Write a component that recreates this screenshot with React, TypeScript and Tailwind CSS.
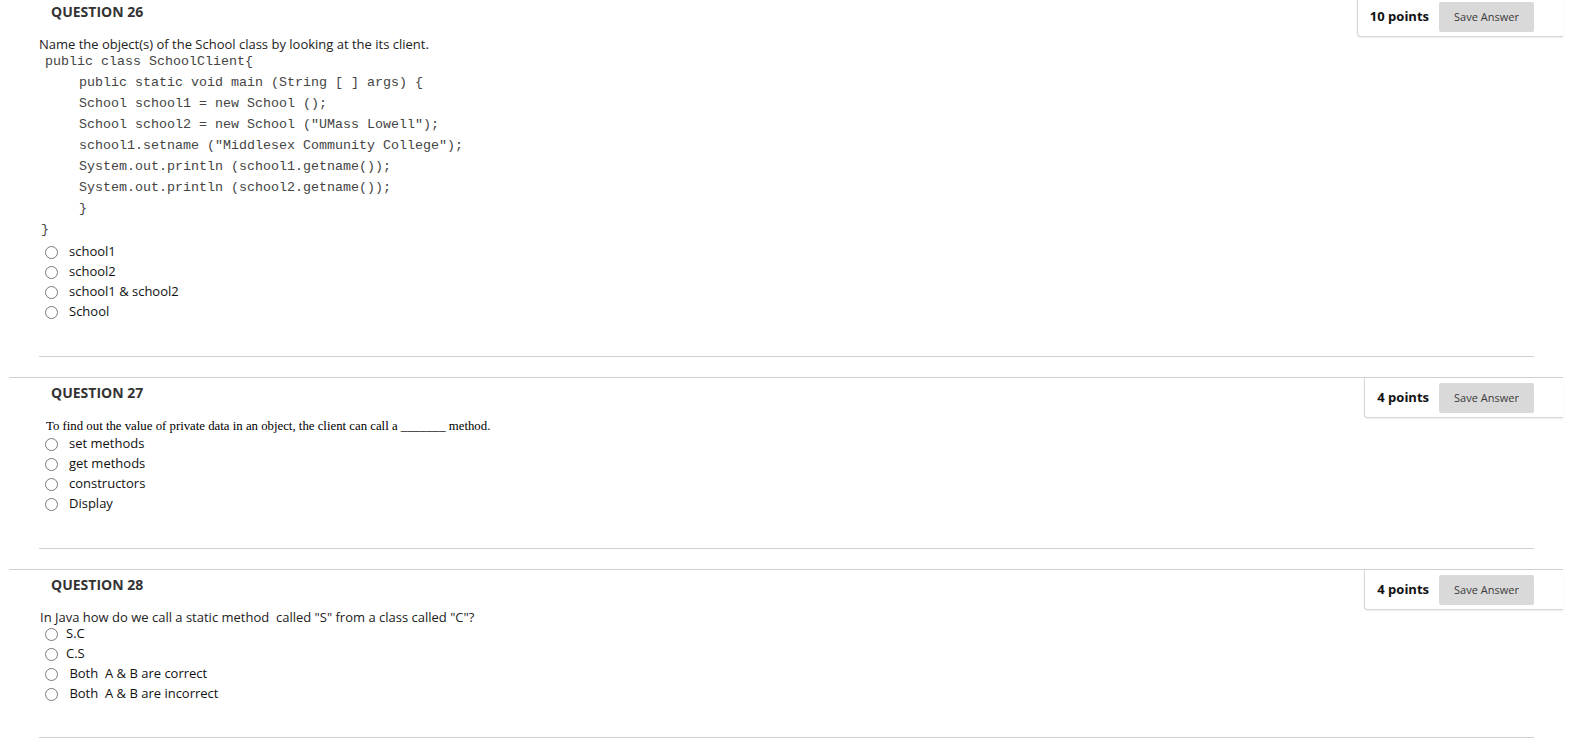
const sans = { fontFamily: '"Open Sans", "Liberation Sans", sans-serif' };

type Option = { label: string; indent?: boolean };

function Radio() {
  return <span className="inline-block w-[13px] h-[13px] rounded-full border border-[#7a7a7a] bg-white shrink-0" />;
}

function Options({ items }: { items: Option[] }) {
  return (
    <div className="flex flex-col">
      {items.map((o) => (
        <label key={o.label} className="flex items-center h-[20px] pl-[6px]">
          <Radio />
          <span className={`text-[13px] text-[#111] whitespace-pre ${o.indent ? "ml-[11px]" : "ml-[8px]"}`}>
            {o.label}
          </span>
        </label>
      ))}
    </div>
  );
}

function Header({ num, points }: { num: number; points: string }) {
  return (
    <div className="flex items-start justify-between h-[40px]">
      <h3 className="pl-[42px] pt-[5px] text-[14px] leading-[20px] font-bold text-[#333]">QUESTION {num}</h3>
      <div className="flex items-center gap-[10px] h-[40px] pl-[12px] pr-[29px] pt-[1px] border-l border-b border-[#d6d6d6] rounded-bl-[4px] shadow-[0_1px_2px_rgba(0,0,0,0.08)] bg-white">
        <span className="text-[13px] font-bold text-[#111]">{points}</span>
        <button className="h-[30px] w-[95px] bg-[#d9d9d9] rounded-[2px] text-[11px] text-[#3a3a3a]">Save Answer</button>
      </div>
    </div>
  );
}

const code = [
  "public static void main (String [ ] args) {",
  "School school1 = new School ();",
  'School school2 = new School ("UMass Lowell");',
  'school1.setname ("Middlesex Community College");',
  "System.out.println (school1.getname());",
  "System.out.println (school2.getname());",
  "}",
];

export default function App() {
  return (
    <div className="bg-white min-h-[752px] overflow-hidden" style={sans}>
      <div className="ml-[9px] w-[1554px] -mt-[4px]">
        {/* question 26 */}
        <section className="border-t border-[#d0d0d0]">
          <Header num={26} points="10 points" />
          <div className="pl-[30px] pr-[29px]">
            <p className="text-[13px] leading-[14px] text-[#222]">Name the object(s) of the School class by looking at the its client.</p>
            <div className="mt-[0px] text-[13.33px] leading-[21px] text-[#444] whitespace-pre" style={{ fontFamily: '"Liberation Mono", monospace' }}>
              <div className="pl-[6px]">public class SchoolClient{"{"}</div>
              {code.map((l) => (
                <div key={l} className="pl-[40px]">{l}</div>
              ))}
              <div className="pl-[2px]">{"}"}</div>
            </div>
            <div className="mt-[2px]">
              <Options items={[{ label: "school1", indent: true }, { label: "school2", indent: true }, { label: "school1 & school2", indent: true }, { label: "School", indent: true }]} />
            </div>
            <div className="mt-[34px] mb-[20px] border-t border-[#cfcfcf]" />
          </div>
        </section>

        {/* question 27 */}
        <section className="border-t border-[#d0d0d0]">
          <Header num={27} points="4 points" />
          <div className="pl-[30px] pr-[29px]">
            <p className="pl-[7px] text-[12.8px] leading-[16px] text-black" style={{ fontFamily: '"Liberation Serif", serif' }}>
              To find out the value of private data in an object, the client can call a _______ method.
            </p>
            <Options items={[{ label: "set methods", indent: true }, { label: "get methods", indent: true }, { label: "constructors", indent: true }, { label: "Display", indent: true }]} />
            <div className="mt-[34px] mb-[20px] border-t border-[#cfcfcf]" />
          </div>
        </section>

        {/* question 28 */}
        <section className="border-t border-[#d0d0d0]">
          <Header num={28} points="4 points" />
          <div className="pl-[30px] pr-[29px]">
            <p className="pl-[1px] text-[13px] leading-[14px] text-[#222] whitespace-pre">In Java how do we call a static method  called "S" from a class called "C"?</p>
            <div className="mt-[0px]">
              <Options items={[{ label: "S.C" }, { label: "C.S" }, { label: " Both  A & B are correct" }, { label: " Both  A & B are incorrect" }]} />
            </div>
            <div className="mt-[33px] border-t border-[#cfcfcf]" />
          </div>
        </section>
      </div>
    </div>
  );
}
